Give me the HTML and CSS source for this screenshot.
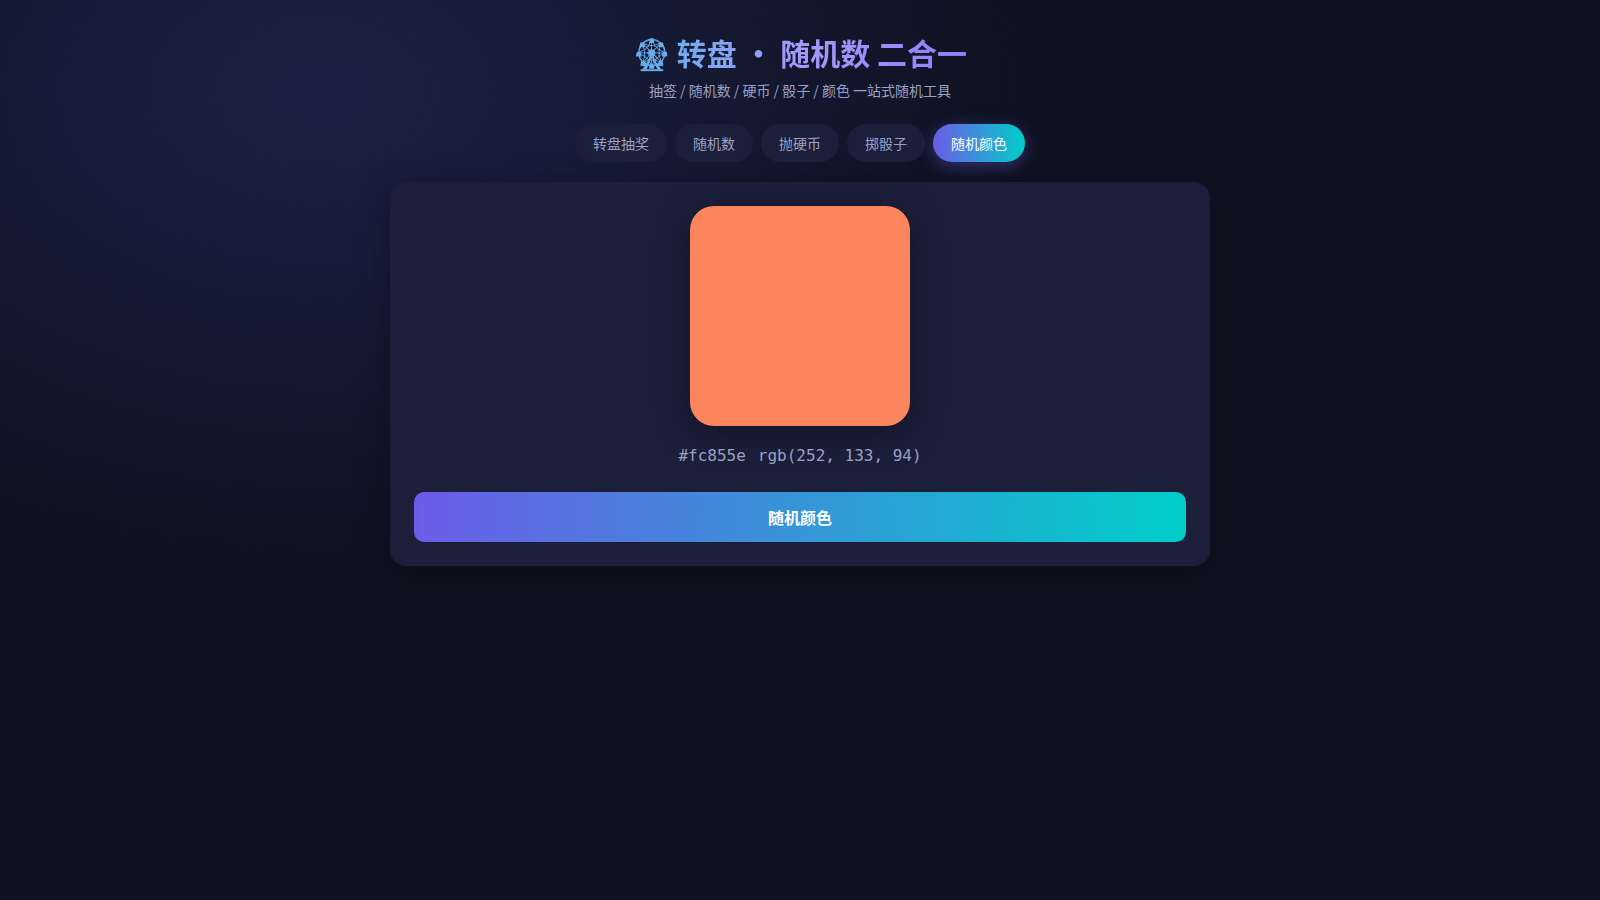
FILE: index.html
```html
<!DOCTYPE html>
<html lang="zh-CN">
<head>
    <meta charset="UTF-8">
    <meta name="viewport" content="width=device-width, initial-scale=1.0">
    <title>转盘 · 随机数 二合一</title>
    <link rel="stylesheet" href="styles.css">
</head>
<body>
    <div class="app">
        <header class="header">
            <h1>🎡 转盘 · 随机数 二合一</h1>
            <p class="subtitle">抽签 / 随机数 / 硬币 / 骰子 / 颜色 一站式随机工具</p>
        </header>

        <nav class="tabs">
            <button class="tab">转盘抽奖</button>
            <button class="tab">随机数</button>
            <button class="tab">抛硬币</button>
            <button class="tab">掷骰子</button>
            <button class="tab active">随机颜色</button>
        </nav>

        <main class="panel">
            <div class="color-box" id="colorBox"></div>
            <div class="color-info">
                <span id="colorHex">#fc855e</span>
                <span id="colorRgb">rgb(252, 133, 94)</span>
            </div>
            <button class="btn-primary" onclick="randomColor()">随机颜色</button>
        </main>
    </div>

    <script>
        function randomColor() {
            const rgb = [0, 0, 0].map(() => Math.floor(Math.random() * 256));
            const hex = '#' + rgb.map(v => v.toString(16).padStart(2, '0')).join('');
            document.getElementById('colorBox').style.background = hex;
            document.getElementById('colorHex').textContent = hex;
            document.getElementById('colorRgb').textContent = `rgb(${rgb.join(', ')})`;
        }
    </script>
</body>
</html>
```

FILE: styles.css
```css
* {
    box-sizing: border-box;
    margin: 0;
    padding: 0;
}
body {
    font-family: "Noto Sans CJK SC", sans-serif;
    background: #0f1221;
    background-image: radial-gradient(1200px 800px at 20% 10%, #1b2145 0%, #0f1221 60%);
    color: #e8eaf6;
    min-height: 100vh;
}
.app {
    max-width: 860px;
    margin: 0 auto;
    padding: 30px 20px 60px;
}
.header {
    text-align: center;
    margin-bottom: 24px;
}
.header h1 {
    font-size: 30px;
    font-weight: 700;
    background: linear-gradient(90deg, #00cec9, #a29bfe, #6c5ce7);
    -webkit-background-clip: text;
    background-clip: text;
    color: transparent;
}
.subtitle {
    font-size: 14px;
    color: #9aa0c7;
    margin-top: 6px;
}
.tabs {
    display: flex;
    flex-wrap: wrap;
    justify-content: center;
    gap: 8px;
    margin-bottom: 20px;
}
.tab {
    border: none;
    background: #1c1f3a;
    color: #9aa0c7;
    font-family: inherit;
    font-size: 14px;
    padding: 9px 18px;
    border-radius: 999px;
    cursor: pointer;
}
.tab.active {
    background: linear-gradient(90deg, #6c5ce7, #00cec9);
    color: #fff;
    box-shadow: 0 4px 16px rgba(108, 92, 231, 0.4);
}
.panel {
    background: #1c1f3a;
    border-radius: 16px;
    padding: 24px;
    box-shadow: 0 8px 32px rgba(0, 0, 0, 0.35);
}
.color-box {
    width: 220px;
    height: 220px;
    margin: 0 auto 20px;
    border-radius: 24px;
    background: #fc855e;
    box-shadow: 0 8px 32px rgba(0, 0, 0, 0.35);
}
.color-info {
    display: flex;
    justify-content: center;
    gap: 12px;
    font-family: "DejaVu Sans Mono", monospace;
    font-size: 16px;
    color: #9aa0c7;
    margin-bottom: 27px;
}
.btn-primary {
    width: 100%;
    border: none;
    border-radius: 10px;
    padding: 13px;
    font-family: inherit;
    font-size: 16px;
    font-weight: 700;
    color: #fff;
    background: linear-gradient(90deg, #6c5ce7, #00cec9);
    cursor: pointer;
}
```
